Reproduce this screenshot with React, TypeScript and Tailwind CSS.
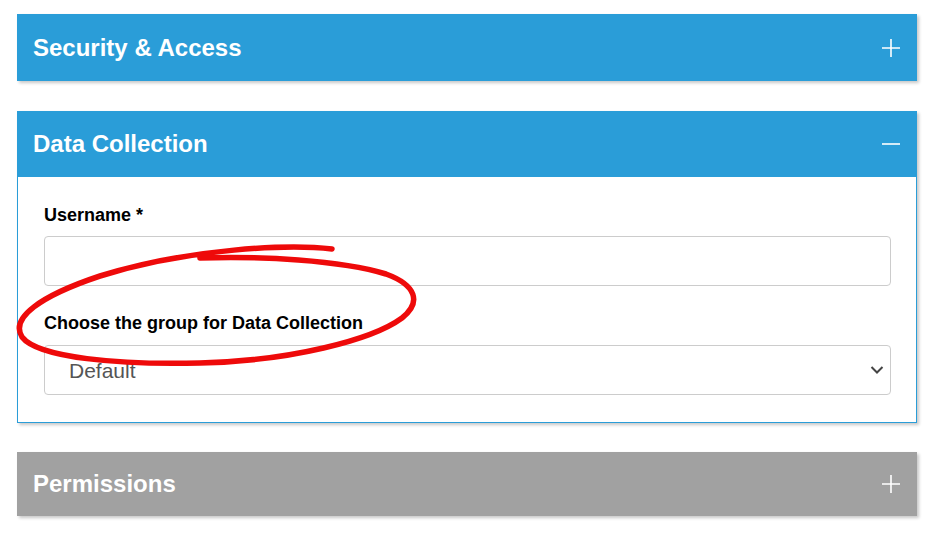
import React from "react";

function Plus() {
  return (
    <svg width="20" height="20" viewBox="0 0 20 20" className="block">
      <path d="M10 1 V19 M1 10 H19" stroke="white" strokeWidth="1.6" fill="none" />
    </svg>
  );
}

function Minus() {
  return (
    <svg width="20" height="20" viewBox="0 0 20 20" className="block">
      <path d="M1 10 H19" stroke="white" strokeWidth="1.6" fill="none" />
    </svg>
  );
}

function Header({ title, color, open, h }: { title: string; color: string; open?: boolean; h: string }) {
  return (
    <div className={`flex items-center justify-between ${h} pl-[16px] pr-[16px] ${color}`}>
      <span className="text-white font-bold text-[24px] leading-[28px]">{title}</span>
      {open ? <Minus /> : <Plus />}
    </div>
  );
}

export default function App() {
  return (
    <div
      className="w-[940px] h-[543px] bg-white relative overflow-hidden"
      style={{ fontFamily: '"Liberation Sans", Arial, sans-serif' }}
    >
      <div className="pt-[14px] pl-[17px] w-[917px] flex flex-col">
        <div className="shadow-[2px_2px_3px_rgba(0,0,0,0.22)]">
          <Header title="Security & Access" color="bg-[#2a9dd8]" h="h-[67px]" />
        </div>

        <div className="mt-[30px] shadow-[2px_2px_3px_rgba(0,0,0,0.22)]">
          <Header title="Data Collection" color="bg-[#2a9dd8]" open h="h-[66px]" />
          <div className="border border-t-0 border-[#2a9dd8] bg-white pl-[26px] pr-[25px] pt-[27px] pb-[27px]">
            <label className="block text-[18px] font-bold text-black leading-[22px]">Username *</label>
            <div className="mt-[10px] h-[50px] border border-[#cccccc] rounded-[4px]" />
            <label className="block mt-[26px] text-[18px] font-bold text-black leading-[22px]">
              Choose the group for Data Collection
            </label>
            <div className="mt-[11px] h-[50px] border border-[#cccccc] rounded-[4px] flex items-center justify-between pl-[24px] pr-[6px]">
              <span className="text-[21px] text-[#555555] leading-[24px] mt-[2px]">Default</span>
              <svg width="14" height="10" viewBox="0 0 14 10">
                <path d="M1.5 2 L7 7.5 L12.5 2" stroke="#444" strokeWidth="2" fill="none" />
              </svg>
            </div>
          </div>
        </div>

        <div className="mt-[29px] shadow-[2px_2px_3px_rgba(0,0,0,0.22)]">
          <Header title="Permissions" color="bg-[#a1a1a1]" h="h-[64px]" />
        </div>
      </div>

      <svg
        className="absolute left-0 top-0 pointer-events-none"
        width="940"
        height="543"
        viewBox="0 0 940 543"
      >
        <path
          d="M332 249 C 290 244, 190 248, 100 276 C 40 296, 10 318, 22 337 C 38 358, 120 365, 200 363 C 290 361, 372 340, 402 318 C 422 302, 416 285, 386 274 C 340 260, 260 256, 200 258"
          stroke="#ee0a0a"
          strokeWidth="5.5"
          strokeLinecap="round"
          fill="none"
        />
      </svg>
    </div>
  );
}
